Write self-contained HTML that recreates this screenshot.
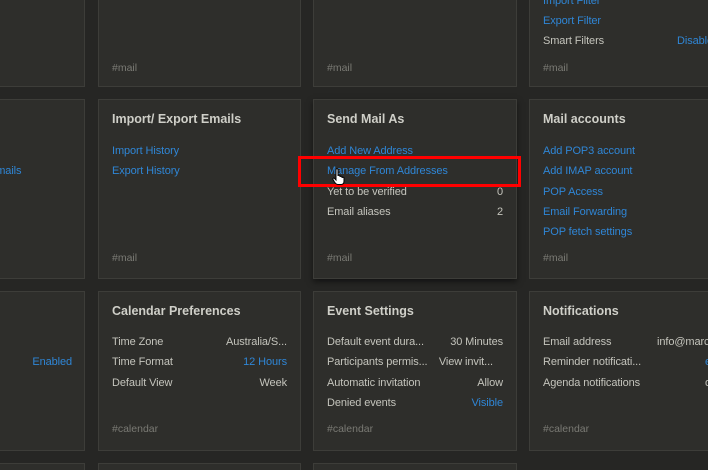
<!DOCTYPE html>
<html><head><style>
html,body{margin:0;width:708px;height:470px;overflow:hidden;}
body{background:#262624;position:relative;font-family:"Liberation Sans",sans-serif;}
.c{position:absolute;background:#2e2e2b;border:1px solid #3d3d39;box-sizing:border-box;}
.t{position:absolute;left:13px;top:12px;font-size:12.5px;font-weight:bold;color:#cfcfc8;white-space:nowrap}
.r{position:absolute;left:13px;right:13px;font-size:11px;color:#c4c4bc;white-space:nowrap;height:14px;line-height:14px;letter-spacing:-0.1px}
.r span{position:absolute;right:0}
.l{color:#2f86d6}
.h{position:absolute;left:13px;font-size:10.5px;color:#7a7a74}
</style></head><body>
<div class="c" style="left:-10px;top:-20px;width:95px;height:107px"></div>
<div class="c" style="left:98px;top:-20px;width:203px;height:107px"><div class="h" style="top:81px">#mail</div></div>
<div class="c" style="left:313px;top:-20px;width:204px;height:107px"><div class="h" style="top:81px">#mail</div></div>
<div class="c" style="left:529px;top:-20px;width:200px;height:107px;overflow:hidden">
<div class="r l" style="top:13px">Import Filter</div>
<div class="r l" style="top:33px">Export Filter</div>
<div class="r" style="top:53px">Smart Filters<span class="l" style="left:134px;right:auto">Disabled</span></div>
<div class="h" style="top:81px">#mail</div></div>

<div class="c" style="left:-10px;top:99px;width:95px;height:180px"><div class="r l" style="top:64px;left:-2px">Emails</div></div>
<div class="c" style="left:98px;top:99px;width:203px;height:180px">
<div class="t">Import/ Export Emails</div>
<div class="r l" style="top:44px">Import History</div>
<div class="r l" style="top:64px">Export History</div>
<div class="h" style="top:152px">#mail</div></div>
<div class="c" style="left:313px;top:99px;width:204px;height:180px;box-shadow:0 3px 6px rgba(0,0,0,.5)">
<div class="t">Send Mail As</div>
<div class="r l" style="top:44px">Add New Address</div>
<div class="r l" style="top:64px">Manage From Addresses</div>
<div class="r" style="top:85px">Yet to be verified<span>0</span></div>
<div class="r" style="top:105px">Email aliases<span>2</span></div>
<div class="h" style="top:152px">#mail</div></div>
<div class="c" style="left:529px;top:99px;width:200px;height:180px">
<div class="t">Mail accounts</div>
<div class="r l" style="top:44px">Add POP3 account</div>
<div class="r l" style="top:64px">Add IMAP account</div>
<div class="r l" style="top:85px">POP Access</div>
<div class="r l" style="top:105px">Email Forwarding</div>
<div class="r l" style="top:125px">POP fetch settings</div>
<div class="h" style="top:152px">#mail</div></div>

<div class="c" style="left:-10px;top:291px;width:95px;height:160px"><div class="r" style="top:63px;right:12px"><span class="l">Enabled</span></div></div>
<div class="c" style="left:98px;top:291px;width:203px;height:160px">
<div class="t">Calendar Preferences</div>
<div class="r" style="top:43px">Time Zone<span>Australia/S...</span></div>
<div class="r" style="top:63px">Time Format<span class="l">12 Hours</span></div>
<div class="r" style="top:84px">Default View<span>Week</span></div>
<div class="h" style="top:131px">#calendar</div></div>
<div class="c" style="left:313px;top:291px;width:204px;height:160px">
<div class="t">Event Settings</div>
<div class="r" style="top:43px">Default event dura...<span>30 Minutes</span></div>
<div class="r" style="top:63px">Participants permis...<span style="right:10px">View invit...</span></div>
<div class="r" style="top:84px">Automatic invitation<span>Allow</span></div>
<div class="r" style="top:104px">Denied events<span class="l">Visible</span></div>
<div class="h" style="top:131px">#calendar</div></div>
<div class="c" style="left:529px;top:291px;width:200px;height:160px;overflow:hidden">
<div class="t">Notifications</div>
<div class="r" style="top:43px">Email address<span style="left:114px;right:auto">info@marco.com</span></div>
<div class="r" style="top:63px">Reminder notificati...<span class="l" style="left:162px;right:auto">email</span></div>
<div class="r" style="top:84px">Agenda notifications<span style="left:162px;right:auto">off</span></div>
<div class="h" style="top:131px">#calendar</div></div>

<div class="c" style="left:-10px;top:463px;width:95px;height:20px"></div>
<div class="c" style="left:98px;top:463px;width:203px;height:20px"></div>
<div class="c" style="left:313px;top:463px;width:204px;height:20px"></div>

<div style="position:absolute;left:298px;top:156px;width:223px;height:31px;border:3px solid #ff0000;box-sizing:border-box"></div>
<svg style="position:absolute;left:332px;top:168px" width="14" height="17" viewBox="0 0 14 17"><path d="M4 1.5c0-1 2-1 2 0V8c0-1 2-1 2 0v1c0-1 2-1 2 0v1c0-1 2-1 2 0v3c0 2-1 3.5-3 3.5H6c-1.5 0-2.5-1-3.5-2.5L1 11.5c-.5-1 .8-2 1.6-1L4 12z" fill="#fff" stroke="#000" stroke-width="1"/></svg>
</body></html>
